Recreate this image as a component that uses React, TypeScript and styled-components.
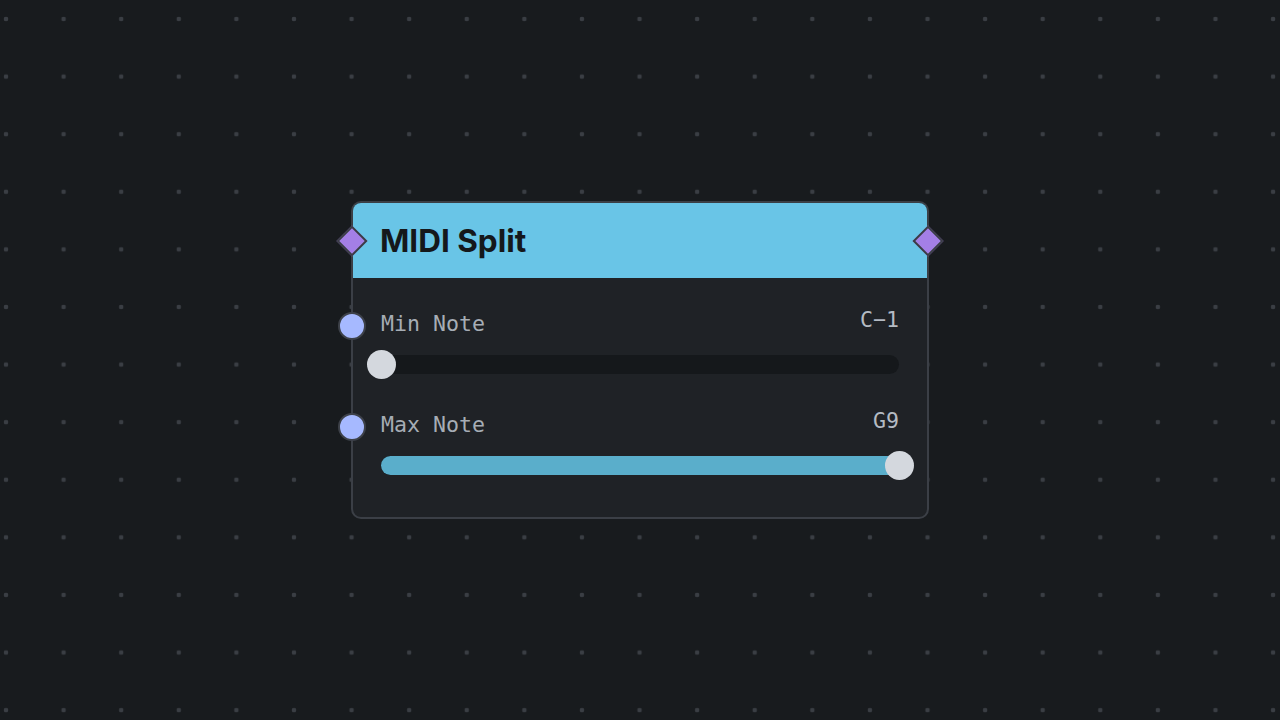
import React from 'react';
import styled, { createGlobalStyle } from 'styled-components';

const GlobalStyle = createGlobalStyle`
  html, body, #root {
    margin: 0;
    padding: 0;
    width: 100%;
    height: 100%;
  }
  body {
    background: #181b1e;
    font-family: Inter, "Noto Sans", sans-serif;
  }
`;

const Canvas = styled.div`
  position: relative;
  width: 1280px;
  height: 720px;
  overflow: hidden;
  background-color: #181b1e;
  background-image: radial-gradient(circle, #3a3e44 2px, transparent 2.6px);
  background-size: 57.6px 57.6px;
  background-position: -22.8px -9.8px;
`;

const Node = styled.div<{ x: number; y: number; w: number }>`
  position: absolute;
  left: ${p => p.x}px;
  top: ${p => p.y}px;
  width: ${p => p.w}px;
  box-sizing: border-box;
  border: 2px solid #3b3f46;
  border-radius: 10px;
  background: #1f2226;
`;

const Header = styled.div`
  position: relative;
  height: 75px;
  display: flex;
  align-items: center;
  padding-left: 27px;
  background: #69c5e7;
  border-radius: 8px 8px 0 0;
`;

const Title = styled.h1`
  margin: 0;
  font-family: Inter, "Noto Sans", sans-serif;
  font-size: 31.5px;
  font-weight: 700;
  letter-spacing: 0;
  color: #15181b;
`;

const Diamond = styled.div<{ side: 'left' | 'right' }>`
  position: absolute;
  top: 50%;
  ${p => (p.side === 'left' ? 'left: -12px;' : 'right: -12px;')}
  width: 18px;
  height: 18px;
  margin-top: -11px;
  background: #a47fe6;
  border: 2px solid #3a3d45;
  transform: rotate(45deg);
`;

const Body = styled.div`
  display: flex;
  flex-direction: column;
  gap: 38px;
  padding: 33px 28px 42px 28px;
`;

const Row = styled.div`
  position: relative;
  display: flex;
  flex-direction: column;
  gap: 19px;
`;

const RowHead = styled.div`
  display: flex;
  justify-content: space-between;
  align-items: flex-start;
  font-family: "DejaVu Sans Mono", "Liberation Mono", monospace;
  font-size: 21.6px;
`;

const Label = styled.span`
  line-height: 25px;
  color: #a6adb5;
`;

const Value = styled.span`
  line-height: 17px;
  color: #b4bbc3;
`;

const InputHandle = styled.div`
  position: absolute;
  left: -43px;
  top: 1px;
  width: 24px;
  height: 24px;
  border-radius: 50%;
  background: #a6b9ff;
  border: 2px solid #3d4149;
`;

const Track = styled.div`
  position: relative;
  height: 19px;
  border-radius: 10px;
  background: #15181b;
`;

const Fill = styled.div`
  height: 100%;
  border-radius: 10px;
  background: #5aaecb;
`;

const Thumb = styled.div`
  position: absolute;
  top: 50%;
  width: 29px;
  height: 29px;
  margin: -14.5px 0 0 -14.5px;
  border-radius: 50%;
  background: #d4d8de;
`;

type Param = { label: string; value: string; pct: number };

const params: Param[] = [
  { label: 'Min Note', value: 'C\u22121', pct: 0 },
  { label: 'Max Note', value: 'G9', pct: 1 },
];

const Slider: React.FC<{ pct: number }> = ({ pct }) => (
  <Track>
    <Fill style={{ width: `${pct * 100}%` }} />
    <Thumb style={{ left: `${pct * 100}%` }} />
  </Track>
);

export default function App() {
  return (
    <>
      <GlobalStyle />
      <Canvas>
        <Node x={351} y={201} w={578}>
          <Header>
            <Diamond side="left" />
            <Title>MIDI Split</Title>
            <Diamond side="right" />
          </Header>
          <Body>
            {params.map(p => (
              <Row key={p.label}>
                <InputHandle />
                <RowHead>
                  <Label>{p.label}</Label>
                  <Value>{p.value}</Value>
                </RowHead>
                <Slider pct={p.pct} />
              </Row>
            ))}
          </Body>
        </Node>
      </Canvas>
    </>
  );
}
